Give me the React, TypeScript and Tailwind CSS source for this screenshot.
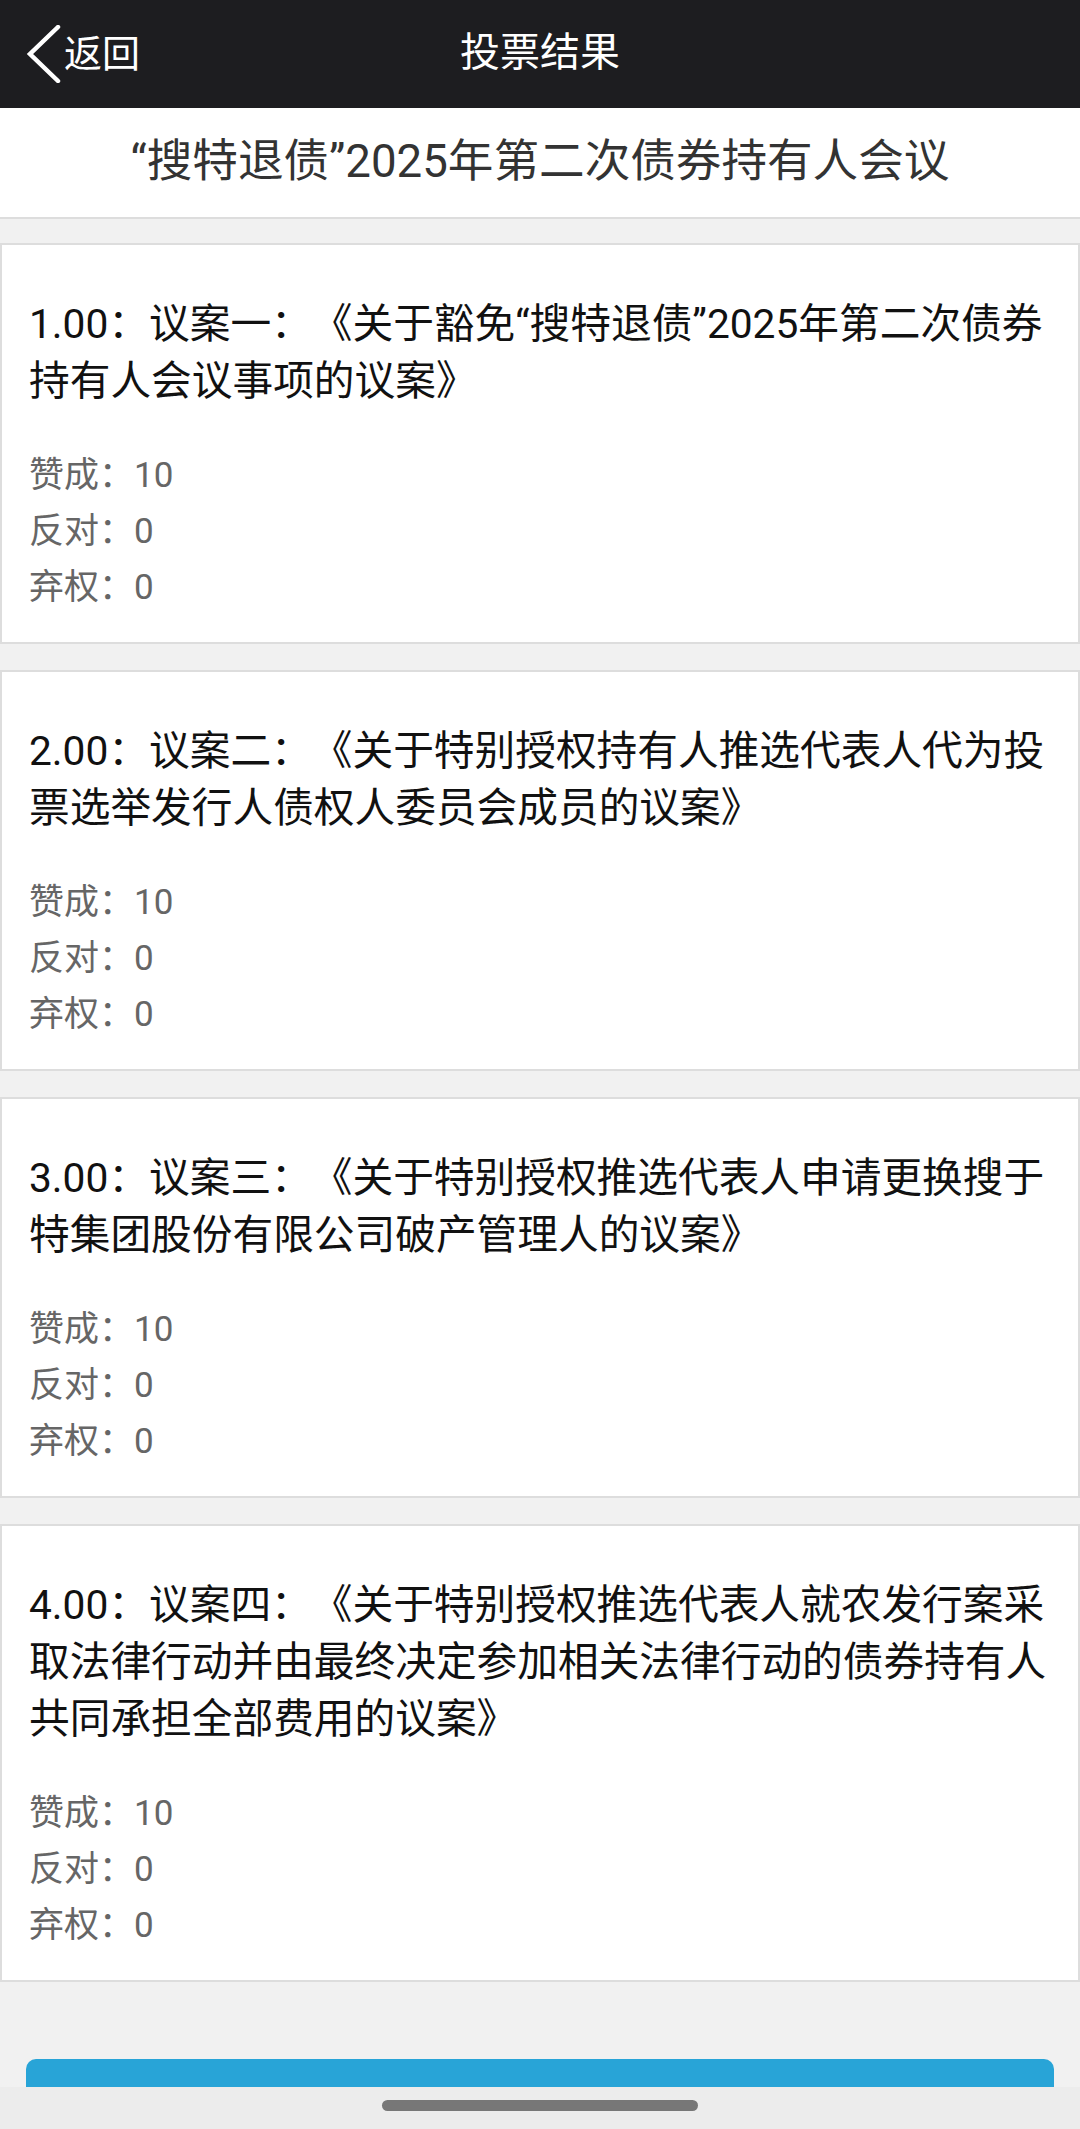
import React from "react";

type Item = { title: string; yes: string; no: string; abstain: string };

const items: Item[] = [
  {
    title: "1.00：议案一：《关于豁免“搜特退债”2025年第二次债券持有人会议事项的议案》",
    yes: "10",
    no: "0",
    abstain: "0",
  },
  {
    title: "2.00：议案二：《关于特别授权持有人推选代表人代为投票选举发行人债权人委员会成员的议案》",
    yes: "10",
    no: "0",
    abstain: "0",
  },
  {
    title: "3.00：议案三：《关于特别授权推选代表人申请更换搜于特集团股份有限公司破产管理人的议案》",
    yes: "10",
    no: "0",
    abstain: "0",
  },
  {
    title: "4.00：议案四：《关于特别授权推选代表人就农发行案采取法律行动并由最终决定参加相关法律行动的债券持有人共同承担全部费用的议案》",
    yes: "10",
    no: "0",
    abstain: "0",
  },
];

function Card({ item }: { item: Item }) {
  return (
    <div className="bg-white border-2 border-[#dddddd] pl-[27px] pr-[18px] pt-[51px] pb-[26px]">
      <div className="text-[40.7px] leading-[57px] text-[#111111]">{item.title}</div>
      <div className="mt-[38px] text-[35px] leading-[56px] text-[#666666]">
        <div>赞成：{item.yes}</div>
        <div>反对：{item.no}</div>
        <div>弃权：{item.abstain}</div>
      </div>
    </div>
  );
}

export default function App() {
  return (
    <div className="relative h-[2129px] w-[1080px] overflow-hidden bg-[#f1f1f1] font-[Roboto,'Noto_Sans_CJK_SC',sans-serif] [text-spacing-trim:space-all]">
      <header className="grid h-[108px] grid-cols-[1fr_auto_1fr] items-center bg-[#1d1d20] text-white">
        <div className="flex items-center pl-[26px]">
          <svg width="36" height="58" viewBox="0 0 36 58" className="shrink-0">
            <polyline
              points="32,2 4,29 32,56"
              fill="none"
              stroke="white"
              strokeWidth="4.5"
              strokeLinecap="round"
              strokeLinejoin="miter"
            />
          </svg>
          <span className="ml-[2px] text-[38px] leading-none">返回</span>
        </div>
        <div className="pb-[2px] text-[40px] leading-none">投票结果</div>
        <div />
      </header>
      <div className="flex h-[111px] items-center justify-center border-b-2 border-[#dddddd] bg-white text-[45.6px] text-[#333333]">
        “搜特退债”2025年第二次债券持有人会议
      </div>
      <div className="flex flex-col gap-[26px] pt-[24px]">
        {items.map((it, i) => (
          <Card key={i} item={it} />
        ))}
      </div>
      <div className="mx-[26px] mt-[77px] h-[90px] rounded-[10px] bg-[#28a4d7]" />
      <div className="absolute bottom-0 left-0 flex h-[42px] w-full justify-center bg-[#ececec] pt-[13px]">
        <div className="h-[11px] w-[316px] rounded-full bg-[#777777]" />
      </div>
    </div>
  );
}
